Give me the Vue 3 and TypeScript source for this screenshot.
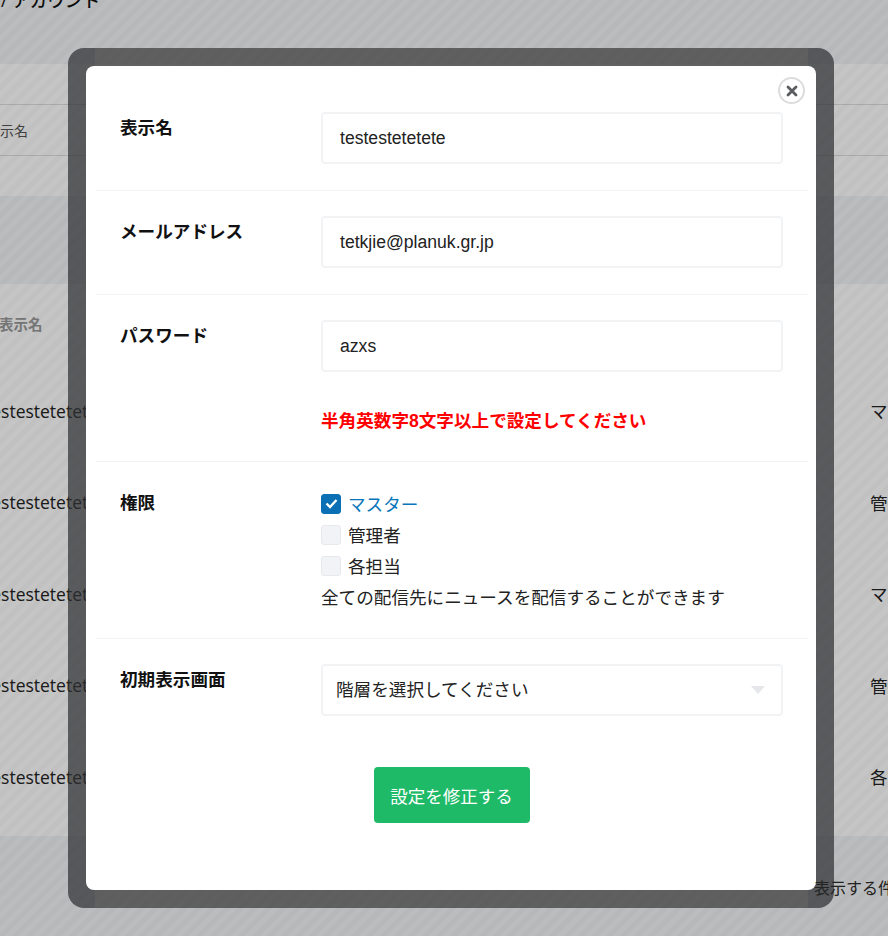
<script setup lang="ts">
interface Row { name: string; role: string }
const rows: Row[] = [
  { name: 'testestetetete', role: 'マスター' },
  { name: 'testestetetete', role: '管理者' },
  { name: 'testestetetete', role: 'マスター' },
  { name: 'testestetetete', role: '管理者' },
  { name: 'testestetetete', role: '各担当' },
]
const roles = [
  { label: 'マスター', checked: true },
  { label: '管理者', checked: false },
  { label: '各担当', checked: false },
]
</script>

<template>
  <div class="page">
    <header class="crumb"><span class="crumb-text">/ アカウント</span></header>
    <section class="filter">
      <div class="filter-line"></div>
      <div class="filter-cell">表示名</div>
    </section>
    <div class="band"></div>
    <section class="table">
      <div class="thead">表示名</div>
      <div v-for="(r, i) in rows" :key="i" class="trow">
        <span class="tname">{{ r.name }}</span>
        <span class="trole">{{ r.role }}</span>
      </div>
    </section>
    <footer class="foot"><span class="foot-text">表示する件数</span></footer>

    <div class="overlay">
      <div class="frame">
        <div class="modal">
          <button class="close" aria-label="閉じる">
            <svg width="14" height="14" viewBox="0 0 14 14">
              <path d="M3 3L11 11M11 3L3 11" stroke="#5a5c5f" stroke-width="2.8" stroke-linecap="round" />
            </svg>
          </button>

          <div class="row">
            <div class="label">表示名</div>
            <div class="field"><div class="input">testestetetete</div></div>
          </div>
          <div class="row">
            <div class="label">メールアドレス</div>
            <div class="field"><div class="input">tetkjie@planuk.gr.jp</div></div>
          </div>
          <div class="row row-pass">
            <div class="label">パスワード</div>
            <div class="field">
              <div class="input">azxs</div>
              <p class="error">半角英数字8文字以上で設定してください</p>
            </div>
          </div>
          <div class="row row-role">
            <div class="label label-role">権限</div>
            <div class="field">
              <div v-for="r in roles" :key="r.label" class="check" :class="{ on: r.checked }">
                <span class="box">
                  <svg v-if="r.checked" width="13" height="11" viewBox="0 0 13 11">
                    <path d="M1.5 5.5L5 9L11.5 2" fill="none" stroke="#fff" stroke-width="2.4" />
                  </svg>
                </span>
                <span>{{ r.label }}</span>
              </div>
              <p class="note">全ての配信先にニュースを配信することができます</p>
            </div>
          </div>
          <div class="row row-last">
            <div class="label">初期表示画面</div>
            <div class="field">
              <div class="input select">階層を選択してください<i class="arrow"></i></div>
            </div>
          </div>
          <div class="actions"><button class="submit">設定を修正する</button></div>
        </div>
      </div>
    </div>
  </div>
</template>

<style>
html, body { margin: 0; overflow: hidden; }
</style>

<style scoped>
.page {
  position: relative;
  width: 888px;
  height: 936px;
  overflow: hidden;
  background: #fff;
  color: #222;
  font-family: "Open Sans", "Noto Sans CJK JP", sans-serif;
  font-size: 16px;
}
.crumb { height: 64px; background: #f2f3f5; display: flow-root; }
.crumb-text {
  display: block;
  margin-top: -10px;
  padding-left: 1px;
  font-size: 17.6px;
  font-weight: 500;
  line-height: 20px;
  color: #111;
}
.filter { height: 132px; background: #fff; }
.filter-line { height: 40px; border-bottom: 1px solid #ddd; }
.filter-cell {
  height: 50px;
  border-bottom: 1px solid #ddd;
  line-height: 52px;
  margin-left: -14px;
  font-size: 14px;
  color: #555;
}
.band { height: 88px; background: #f2f3f5; }
.table { height: 552px; background: #fff; }
.thead {
  height: 81px;
  line-height: 82px;
  margin-left: -1px;
  font-size: 14.5px;
  font-weight: 700;
  color: #999;
}
.trow {
  height: 91.5px;
  display: flex;
  justify-content: space-between;
  align-items: center;
  margin-left: -15px;
  white-space: nowrap;
}
.tname { font-size: 17.5px; }
.trole { width: 18px; overflow: hidden; font-size: 17.5px; }
.foot { height: 100px; background: #f2f3f5; }
.foot-text {
  position: absolute;
  z-index: 3;
  left: 814px;
  top: 875px;
  font-size: 16px;
  white-space: nowrap;
  color: #222;
}
.overlay {
  position: absolute;
  inset: 0;
  z-index: 2;
  display: flex;
  flex-direction: column;
  align-items: flex-start;
  padding: 48px 0 0 68px;
  box-sizing: border-box;
  background: repeating-linear-gradient(135deg, rgba(0,0,0,.242) 0 5px, rgba(0,0,0,.228) 5px 10px);
}
.frame {
  box-sizing: border-box;
  width: 766px;
  height: 860px;
  padding: 18px;
  border-radius: 16px;
  background: linear-gradient(90deg, rgba(45,47,50,.71) 27px, rgba(50,50,50,.67) 27px, rgba(50,50,50,.67) calc(100% - 26px), rgba(45,47,50,.71) calc(100% - 26px));
}
.modal {
  position: relative;
  box-sizing: border-box;
  height: 824px;
  padding: 21px 8px 0 10px;
  border-radius: 8px;
  background: #fff;
  color: #222;
  font-family: "Liberation Sans", "Noto Sans CJK JP", sans-serif;
  font-size: 17.6px;
}
.close {
  position: absolute;
  top: 11px;
  right: 11px;
  width: 27px;
  height: 27px;
  padding: 0;
  display: flex;
  align-items: center;
  justify-content: center;
  border: 2px solid #dcdcdc;
  border-radius: 50%;
  background: #fff;
  box-sizing: border-box;
}
.row {
  display: flex;
  padding: 25px 25px 26px 24px;
  border-bottom: 1px solid #f1f2f4;
}
.row-pass { padding-bottom: 27px; }
.row-role { padding-top: 26px; padding-bottom: 25px; }
.row-last { border-bottom: 0; padding-bottom: 0; }
.label {
  width: 201px;
  flex: none;
  margin-top: 1px;
  font-weight: 700;
  font-size: 17.6px;
  line-height: 30px;
  color: #111;
}
.label-role { margin-top: 0; }
.field { flex: 1; min-width: 0; }
.input {
  box-sizing: border-box;
  height: 52px;
  padding: 0 17px;
  border: 2px solid #f2f3f5;
  border-radius: 4px;
  background: #fff;
  line-height: 49px;
  color: #222;
}
.error {
  margin: 36px 0 0;
  font-size: 17.6px;
  font-weight: 700;
  line-height: 26px;
  color: #f00;
}
.check {
  display: flex;
  align-items: center;
  gap: 7px;
  height: 31px;
  color: #222;
}
.check.on { color: #0a76ba; }
.box {
  box-sizing: border-box;
  width: 20px;
  height: 20px;
  display: flex;
  align-items: center;
  justify-content: center;
  border: 1px solid #e7e9ec;
  border-radius: 3px;
  background: #f1f3f6;
}
.check.on .box { background: #0a6fb4; border-color: #0a6fb4; }
.note { margin: 2px 0 0; line-height: 30px; color: #222; }
.select { position: relative; padding-left: 13px; }
.arrow {
  position: absolute;
  right: 16px;
  top: 20px;
  width: 0;
  height: 0;
  border-left: 7.5px solid transparent;
  border-right: 7.5px solid transparent;
  border-top: 8px solid #e5e7ea;
}
.actions { display: flex; justify-content: center; margin-top: 51px; }
.submit {
  width: 156px;
  height: 56px;
  margin-right: 1px;
  border: 0;
  border-radius: 4px;
  background: #1fba68;
  color: #fff;
  font-family: inherit;
  font-size: 17.5px;
}
</style>
